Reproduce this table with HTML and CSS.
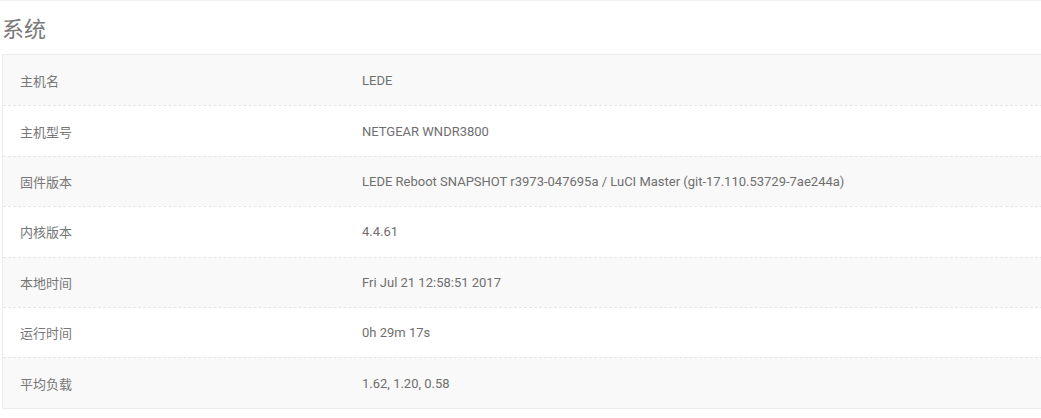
FILE: index.html
```html
<!DOCTYPE html>
<html lang="zh">
<head>
<meta charset="utf-8">
<link rel="stylesheet" href="styles.css">
</head>
<body>
<div class="page">
  <h2 class="title">系统</h2>
  <div class="table">
    <div class="row"><div class="label">主机名</div><div class="value">LEDE</div></div>
    <div class="row"><div class="label">主机型号</div><div class="value">NETGEAR WNDR3800</div></div>
    <div class="row"><div class="label">固件版本</div><div class="value">LEDE Reboot SNAPSHOT r3973-047695a / LuCI Master (git-17.110.53729-7ae244a)</div></div>
    <div class="row"><div class="label">内核版本</div><div class="value">4.4.61</div></div>
    <div class="row"><div class="label">本地时间</div><div class="value">Fri Jul 21 12:58:51 2017</div></div>
    <div class="row"><div class="label">运行时间</div><div class="value">0h 29m 17s</div></div>
    <div class="row"><div class="label">平均负载</div><div class="value">1.62, 1.20, 0.58</div></div>
  </div>
</div>
</body>
</html>
```
FILE: styles.css
```css
html, body {
  margin: 0;
  padding: 0;
  background: #fff;
}
body {
  font-family: Roboto, "Noto Sans CJK SC", sans-serif;
  color: #707070;
  overflow: hidden;
}
.page {
  border-top: 1px solid #f0f0f0;
  padding-left: 2px;
}
.title {
  margin: 0;
  height: 53px;
  line-height: 52px;
  font-size: 22px;
  font-weight: 400;
  color: #7a7a7a;
  font-family: "Noto Sans CJK SC", sans-serif;
}
.table {
  width: 1060px;
  border: 1px solid #ececec;
  border-right: none;
}
.row {
  display: flex;
  align-items: center;
  height: 50.4px;
  box-sizing: border-box;
  border-top: 1px dashed #e6e6e6;
  font-size: 13px;
}
.row:first-child {
  border-top: none;
}
.row:nth-child(odd) {
  background: #f9f9f9;
}
.label {
  width: 342px;
  padding-left: 17px;
  font-family: "Noto Sans CJK SC", sans-serif;
  color: #777;
}
.value {
  color: #6f6f6f;
}
```
